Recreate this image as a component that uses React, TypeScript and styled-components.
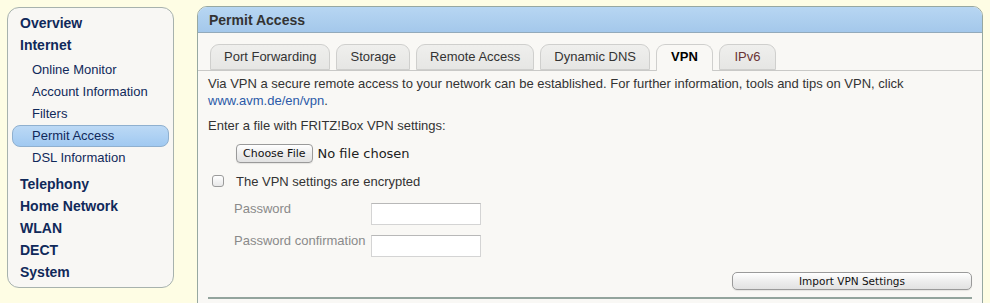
import React from 'react'
import styled, { createGlobalStyle } from 'styled-components'

const GlobalStyle = createGlobalStyle`
  html, body {
    margin: 0;
    padding: 0;
    background: #fefde4;
  }
  body {
    font-family: "Liberation Sans", Arial, sans-serif;
  }
`

const Page = styled.div`
  display: flex;
  align-items: flex-start;
  padding: 6px 7px 0 7px;
  gap: 23px;
  width: 990px;
  height: 303px;
  box-sizing: border-box;
  overflow: hidden;
`

const Sidebar = styled.nav`
  width: 167px;
  height: 281px;
  margin-top: 1px;
  box-sizing: border-box;
  background: #f8f7f4;
  border: 1px solid #a7b2ad;
  border-radius: 12px;
  padding: 4px 4px 0 4px;
  display: flex;
  flex-direction: column;
`

const MainItem = styled.div<{ $gap?: number }>`
  font-size: 14px;
  font-weight: bold;
  line-height: 22px;
  color: #10295a;
  padding-left: 8px;
  margin-top: ${p => p.$gap || 0}px;
`

const SubItem = styled.div<{ $active?: boolean; $gap?: number }>`
  font-size: 13px;
  line-height: 20px;
  height: 22px;
  box-sizing: border-box;
  color: #10295a;
  padding-left: 19px;
  margin-top: ${p => p.$gap || 0}px;
  border-radius: 8px;
  border: 1px solid ${p => (p.$active ? '#8fb0cf' : 'transparent')};
  background: ${p => (p.$active ? 'linear-gradient(#bcd9f5, #a0c9f1)' : 'transparent')};
`

const Panel = styled.section`
  width: 786px;
  height: 310px;
  box-sizing: border-box;
  border: 1px solid #97a8a1;
  border-radius: 10px 10px 0 0;
  background: #f9f8f5;
  display: flex;
  flex-direction: column;
`

const PanelHeader = styled.div`
  height: 25px;
  border-radius: 9px 9px 0 0;
  background: linear-gradient(#b7d6f2, #a4c8eb);
  border-bottom: 1px solid #93aabb;
  font-size: 14px;
  font-weight: bold;
  color: #333;
  line-height: 26px;
  padding-left: 11px;
`

const TabBar = styled.div`
  display: flex;
  gap: 6px;
  margin-top: 11px;
  padding-left: 12px;
  border-bottom: 1px solid #c9c9c7;
  height: 26px;
`

const Tab = styled.div<{ $active?: boolean; $tint?: string }>`
  height: ${p => (p.$active ? 27 : 26)}px;
  min-width: 57px;
  box-sizing: border-box;
  padding: 0 13px;
  border: 1px solid #cfcfcd;
  border-bottom: ${p => (p.$active ? 'none' : '1px solid #cfcfcd')};
  border-radius: 9px 9px 0 0;
  background: ${p => (p.$active ? '#f9f8f5' : 'linear-gradient(#efefed, #e6e6e4)')};
  font-size: 13px;
  line-height: 24px;
  text-align: center;
  font-weight: ${p => (p.$active ? 'bold' : 'normal')};
  color: ${p => p.$tint || (p.$active ? '#000' : '#333')};
  white-space: nowrap;
`

const Content = styled.div`
  padding: 4px 10px 0 10px;
  font-size: 13px;
  color: #333;
  display: flex;
  flex-direction: column;
`

const Para = styled.p<{ $gap?: number }>`
  margin: ${p => p.$gap || 0}px 0 0 0;
  line-height: 17px;
`

const Link = styled.a`
  color: #2b5aa8;
  text-decoration: none;
`

const FileRow = styled.div`
  display: flex;
  align-items: center;
  gap: 5px;
  margin-top: 10px;
  padding-left: 28px;
  height: 19px;
`

const MacButton = styled.button<{ $wide?: boolean }>`
  font-family: "DejaVu Sans", sans-serif;
  font-size: ${p => (p.$wide ? 10.5 : 11)}px;
  color: #111;
  height: ${p => (p.$wide ? 18 : 19)}px;
  width: ${p => (p.$wide ? '240px' : 'auto')};
  padding: 0 6px;
  border: 1px solid #9a9a9a;
  border-radius: ${p => (p.$wide ? 5 : 4)}px;
  background: linear-gradient(#ffffff, #eeeeee 50%, #e2e2e2);
  box-shadow: 0 1px 1px rgba(0, 0, 0, 0.08);
  line-height: 16px;
`

const FileName = styled.span`
  font-family: "DejaVu Sans", sans-serif;
  font-size: 13px;
  color: #222;
`

const CheckRow = styled.label`
  display: flex;
  align-items: center;
  gap: 12px;
  margin-top: 9px;
  padding-left: 4px;
  height: 18px;
`

const Checkbox = styled.span`
  width: 10px;
  height: 10px;
  border: 1px solid #9b9b9b;
  border-radius: 3px;
  background: linear-gradient(#ffffff, #e8e8e8);
`

const FieldRow = styled.div<{ $gap: number }>`
  display: flex;
  align-items: flex-start;
  padding-left: 26px;
  margin-top: ${p => p.$gap}px;
`

const FieldLabel = styled.span`
  width: 137px;
  margin-top: -2px;
  line-height: 16px;
  color: #8a8a8a;
  font-size: 13px;
  white-space: nowrap;
`

const TextInput = styled.div`
  width: 110px;
  height: 22px;
  box-sizing: border-box;
  background: #fff;
  border: 1px solid #d4d4d4;
  border-top-color: #b8b8b8;
`

const ButtonRow = styled.div`
  display: flex;
  justify-content: flex-end;
  margin-top: 15px;
`

const Divider = styled.div`
  margin-top: 7px;
  border-top: 2px solid #93a49d;
`

const tabs = ['Port Forwarding', 'Storage', 'Remote Access', 'Dynamic DNS', 'VPN', 'IPv6']

export default function App() {
  return (
    <>
      <GlobalStyle />
      <Page>
        <Sidebar>
          <MainItem>Overview</MainItem>
          <MainItem>Internet</MainItem>
          <SubItem $gap={3}>Online Monitor</SubItem>
          <SubItem>Account Information</SubItem>
          <SubItem>Filters</SubItem>
          <SubItem $active>Permit Access</SubItem>
          <SubItem>DSL Information</SubItem>
          <MainItem $gap={4}>Telephony</MainItem>
          <MainItem>Home Network</MainItem>
          <MainItem>WLAN</MainItem>
          <MainItem>DECT</MainItem>
          <MainItem>System</MainItem>
        </Sidebar>
        <Panel>
          <PanelHeader>Permit Access</PanelHeader>
          <TabBar>
            {tabs.map(t => (
              <Tab key={t} $active={t === 'VPN'} $tint={t === 'IPv6' ? '#6a3434' : undefined}>
                {t}
              </Tab>
            ))}
          </TabBar>
          <Content>
            <Para>
              Via VPN a secure remote access to your network can be established. For further information, tools and tips on VPN, click{' '}
              <Link href="#">www.avm.de/en/vpn</Link>.
            </Para>
            <Para $gap={8}>Enter a file with FRITZ!Box VPN settings:</Para>
            <FileRow>
              <MacButton>Choose File</MacButton>
              <FileName>No file chosen</FileName>
            </FileRow>
            <CheckRow>
              <Checkbox />
              The VPN settings are encrypted
            </CheckRow>
            <FieldRow $gap={13}>
              <FieldLabel>Password</FieldLabel>
              <TextInput />
            </FieldRow>
            <FieldRow $gap={10}>
              <FieldLabel>Password confirmation</FieldLabel>
              <TextInput />
            </FieldRow>
            <ButtonRow>
              <MacButton $wide>Import VPN Settings</MacButton>
            </ButtonRow>
            <Divider />
          </Content>
        </Panel>
      </Page>
    </>
  )
}
